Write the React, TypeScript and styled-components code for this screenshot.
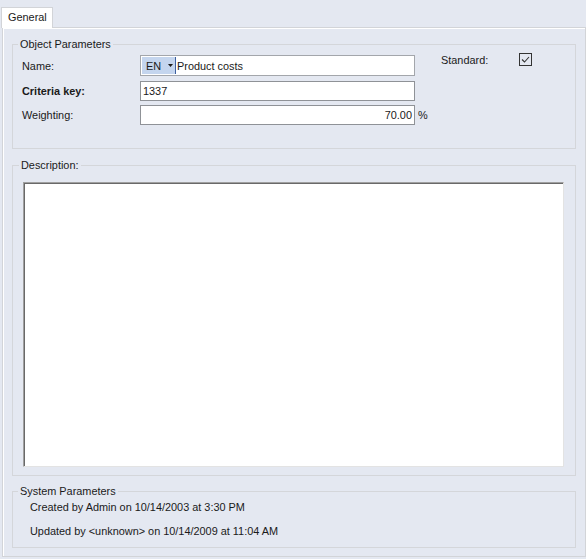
import React from 'react';
import styled, { createGlobalStyle } from 'styled-components';

const GlobalStyle = createGlobalStyle`
  html, body {
    margin: 0;
    padding: 0;
    background: #e4e8f1;
  }
  body {
    font-family: "Liberation Sans", Arial, sans-serif;
    font-size: 10.9px;
    color: #1a1a1a;
  }
`;

const Window = styled.div`
  display: flex;
  flex-direction: column;
  width: 586px;
  height: 559px;
  background: #e4e8f1;
`;

const TabStrip = styled.div`
  display: flex;
  align-items: flex-end;
  height: 27px;
  padding-left: 1px;
  flex: none;
`;

const Tab = styled.div`
  position: relative;
  z-index: 1;
  box-sizing: border-box;
  width: 52px;
  height: 21px;
  margin-bottom: -1px;
  padding-left: 6px;
  border: 1px solid #d2d4d8;
  border-bottom: none;
  background: #ffffff;
  line-height: 19px;
`;

const Panel = styled.div`
  flex: 1;
  display: flex;
  flex-direction: column;
  margin: 0 0 2px 2px;
  padding: 10px 9px 8px 9px;
  border: 1px solid #d2d4d8;
  box-shadow: inset 1px 1px 0 #ffffff;
  min-height: 0;
`;

const GroupBox = styled.fieldset<{ $pad: string; $grow?: boolean; $top?: number }>`
  margin: ${(p) => p.$top ?? 0}px 0 0 0;
  min-width: 0;
  border: 1px solid #d4d6da;
  padding: ${(p) => p.$pad};
  ${(p) => (p.$grow ? 'flex: 1; display: flex; flex-direction: column; min-height: 0;' : '')}
`;

const Legend = styled.legend`
  padding: 0 2px;
  margin-left: -4px;
  line-height: 13px;
`;

const ParamGrid = styled.div`
  display: grid;
  grid-template-columns: 118px 275px 26px 78px 13px;
  grid-template-rows: 22px 20px 20px;
  row-gap: 4px;
  align-items: center;
`;

const FieldLabel = styled.div<{ $bold?: boolean }>`
  font-weight: ${(p) => (p.$bold ? 'bold' : 'normal')};
  line-height: 13px;
`;

const TextBox = styled.div<{ $h: number; $right?: boolean }>`
  box-sizing: border-box;
  height: ${(p) => p.$h}px;
  align-self: start;
  display: flex;
  align-items: center;
  justify-content: ${(p) => (p.$right ? 'flex-end' : 'flex-start')};
  padding: 0 2px;
  border: 1px solid #8f9297;
  background: #ffffff;
  white-space: nowrap;
`;

const NameBox = styled(TextBox)`
  padding: 1px 1px 0 1px;
  align-items: stretch;
  border-color: #a3a6ab;
`;

const LangPicker = styled.div`
  display: flex;
  align-items: center;
  gap: 7px;
  width: 34px;
  box-sizing: border-box;
  padding-left: 4px;
  background: #c4d5ee;
  border-right: 1px solid #3d5f9e;
  margin-bottom: 1px;
`;

const NameText = styled.span`
  display: flex;
  align-items: center;
  padding-left: 1px;
`;

const Suffix = styled.div`
  padding-left: 3px;
`;

const StandardLabel = styled.div`
  align-self: start;
  margin-top: -1px;
  line-height: 13px;
`;

const CheckBox = styled.div`
  align-self: start;
  margin-top: -2px;
  box-sizing: border-box;
  width: 13px;
  height: 13px;
  border: 1px solid #333333;
  display: flex;
`;

const DescArea = styled.div`
  flex: 1;
  background: #ffffff;
  border-top: 1px solid #a0a0a0;
  border-left: 1px solid #a0a0a0;
  border-right: 1px solid #e3e3e3;
  border-bottom: 1px solid #e3e3e3;
  box-shadow: inset 1px 1px 0 #696969;
`;

const SysList = styled.div`
  display: flex;
  flex-direction: column;
  gap: 11px;
  padding-left: 8px;
`;

const SysLine = styled.div`
  line-height: 13px;
  white-space: nowrap;
`;

export default function App() {
  return (
    <>
      <GlobalStyle />
      <Window>
        <TabStrip>
          <Tab>General</Tab>
        </TabStrip>
        <Panel>
          <GroupBox $pad="4px 9px 23px 9px">
            <Legend>Object Parameters</Legend>
            <ParamGrid>
              <FieldLabel>Name:</FieldLabel>
              <NameBox $h={21}>
                <LangPicker>
                  <span>EN</span>
                  <svg width="5" height="3" viewBox="0 0 5 3">
                    <path d="M0 0H5L2.5 3Z" fill="#1a1a1a" />
                  </svg>
                </LangPicker>
                <NameText>Product costs</NameText>
              </NameBox>
              <div />
              <StandardLabel>Standard:</StandardLabel>
              <CheckBox>
                <svg width="11" height="11" viewBox="0 0 11 11">
                  <path d="M2 5.5L4.5 8L9 3" fill="none" stroke="#333333" strokeWidth="1.1" />
                </svg>
              </CheckBox>

              <FieldLabel $bold>Criteria key:</FieldLabel>
              <TextBox $h={20}>1337</TextBox>
              <div />
              <div />
              <div />

              <FieldLabel>Weighting:</FieldLabel>
              <TextBox $h={20} $right>70.00</TextBox>
              <Suffix>%</Suffix>
            </ParamGrid>
          </GroupBox>

          <GroupBox $pad="10px 11px 8px 10px" $grow $top={10}>
            <Legend>Description:</Legend>
            <DescArea />
          </GroupBox>

          <GroupBox $pad="3px 9px 9px 9px" $top={9}>
            <Legend>System Parameters</Legend>
            <SysList>
              <SysLine>Created by Admin on 10/14/2003 at 3:30 PM</SysLine>
              <SysLine>Updated by &lt;unknown&gt; on 10/14/2009 at 11:04 AM</SysLine>
            </SysList>
          </GroupBox>
        </Panel>
      </Window>
    </>
  );
}
